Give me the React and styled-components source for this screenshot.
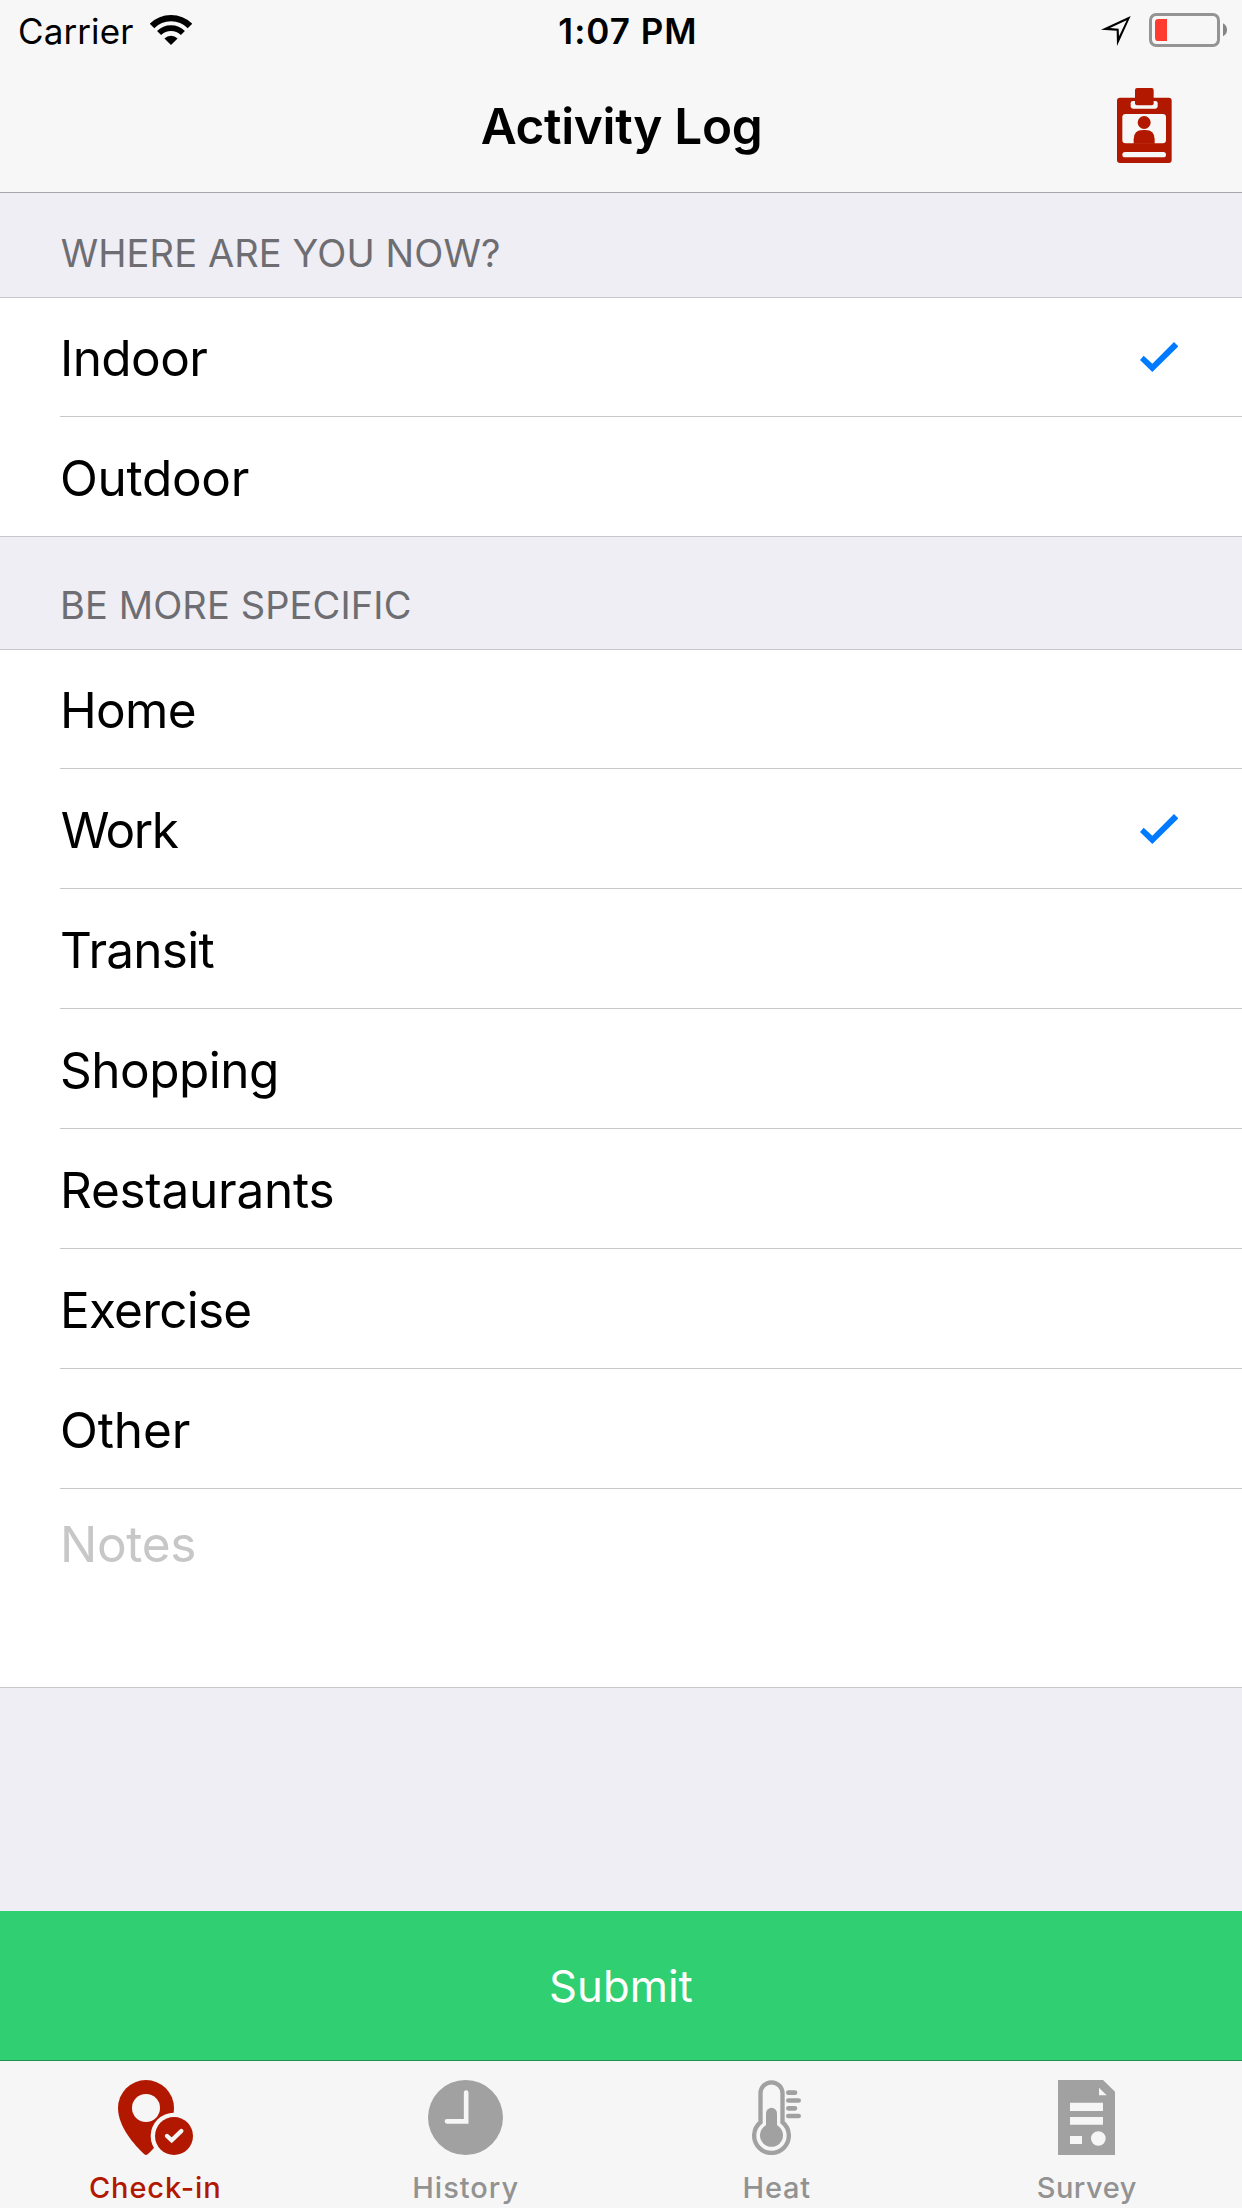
import React, { useState } from "react";
import styled, { createGlobalStyle } from "styled-components";

const RED = "#b21800";
const ICON_GREY = "#a1a1a1";
const LABEL_GREY = "#929292";

const GlobalStyle = createGlobalStyle`
  *, *::before, *::after { box-sizing: border-box; }
  body { margin: 0; background: #efeff4; }
`;

const Screen = styled.div`
  width: 1242px;
  height: 2208px;
  display: flex;
  flex-direction: column;
  overflow: hidden;
  background: #efeef4;
  color: #000;
  font-family: Inter, "Liberation Sans", sans-serif;
  svg { display: block; flex: none; }
`;

const Header = styled.header`
  flex: none;
  height: 193px;
  background: #f7f7f7;
  border-bottom: 1px solid #a7a7aa;
`;

const StatusBar = styled.div`
  height: 60px;
  display: grid;
  grid-template-columns: 1fr auto 1fr;
  font-size: 35px;
  line-height: 62px;
  white-space: nowrap;
`;

const StatusLeft = styled.div`
  display: flex;
  align-items: flex-start;
  gap: 16px;
  padding-left: 18px;
  letter-spacing: 0.11px;
  svg { margin-top: 14.5px; }
`;

const Clock = styled.div`
  padding-left: 14px;
  font-weight: 600;
  letter-spacing: 1.01px;
`;

const StatusRight = styled.div`
  display: flex;
  justify-content: flex-end;
  align-items: flex-start;
  gap: 18px;
  padding: 13px 15px 0 0;
  svg:first-child { margin-top: 3px; }
`;

const NavBar = styled.div`
  height: 132px;
  display: grid;
  grid-template-columns: 1fr auto 1fr;
`;

const Title = styled.h1`
  grid-column: 2;
  margin: 0;
  padding-left: 1px;
  font-size: 49.5px;
  font-weight: 600;
  line-height: 132px;
  letter-spacing: -0.345px;
`;

const NavButton = styled.button`
  justify-self: end;
  align-self: start;
  margin: 28px 70px 0 0;
  padding: 0;
  border: 0;
  background: none;
`;

const SectionHeader = styled.h2`
  flex: none;
  height: ${(p) => p.$height}px;
  margin: 0;
  padding-left: ${(p) => p.$inset}px;
  display: flex;
  align-items: flex-end;
  font-size: 38px;
  font-weight: 400;
  line-height: 88px;
  letter-spacing: ${(p) => p.$tracking}px;
  color: #6d6d72;
`;

const Group = styled.div`
  flex: none;
  background: #fff;
  border-top: 1px solid #c8c7cc;
  border-bottom: 1px solid #c8c7cc;
`;

const Row = styled.div`
  height: 120px;
  margin-left: 60px;
  padding-right: 63.7px;
  display: flex;
  justify-content: space-between;
  align-items: flex-end;
  border-bottom: 1px solid #c8c7cc;
  &:first-child { height: 119px; }
  &:last-child { height: 119px; border-bottom: 0; }
  svg { margin-bottom: 44.3px; }
`;

const RowLabel = styled.span`
  padding-left: ${(p) => p.$inset}px;
  font-size: 49.5px;
  line-height: 116px;
  letter-spacing: ${(p) => p.$tracking}px;
`;

const Notes = styled.div`
  height: 198px;
  padding-left: 60px;
  font-size: 49.5px;
  line-height: 110px;
  letter-spacing: -0.31px;
  color: #c7c7c7;
`;

const Spacer = styled.div`
  flex: 1;
`;

const Submit = styled.button`
  flex: none;
  height: 149px;
  margin: 0;
  padding: 2px 0 0;
  border: 0;
  background: #30cf71;
  color: #fff;
  font: 400 43.6px/147px Inter, "Liberation Sans", sans-serif;
  letter-spacing: 0.08px;
  text-align: center;
`;

const TabBar = styled.nav`
  flex: none;
  height: 148px;
  display: grid;
  grid-template-columns: repeat(4, 1fr);
  background: #f6f6f6;
  border-top: 1px solid #219150;
`;

const Tab = styled.div`
  display: flex;
  flex-direction: column;
  align-items: center;
  gap: 15px;
  padding-top: 19px;
  color: ${(p) => (p.$active ? RED : LABEL_GREY)};
`;

const TabLabel = styled.span`
  padding-left: ${(p) => p.$inset}px;
  font-size: 29px;
  font-weight: 500;
  line-height: 35px;
  letter-spacing: ${(p) => p.$tracking}px;
`;

const WifiIcon = () => (
  <svg width="42" height="30" viewBox="0 0 126 90">
    <path d="M6.1 33.1A80.5 80.5 0 0 1 119.9 33.1" fill="none" stroke="#000" strokeWidth="19" />
    <path d="M27.3 54.3A50.5 50.5 0 0 1 98.7 54.3" fill="none" stroke="#000" strokeWidth="17" />
    <path d="M63 90L43.2 70.2A28 28 0 0 1 82.8 70.2Z" />
  </svg>
);

const LocationIcon = () => (
  <svg width="30" height="30" viewBox="0 0 90 90">
    <path fillRule="evenodd" d="M89 0L0 41L47 44L48 90ZM77 13L27 36L53 38L54 61Z" />
  </svg>
);

const BatteryIcon = () => (
  <svg width="78" height="34" viewBox="0 0 234 102">
    <rect x="4.5" y="4.5" width="204" height="93" rx="17" fill="none" stroke="#949494" strokeWidth="9" />
    <path d="M54 18V84H28Q18 84 18 74V28Q18 18 28 18Z" fill="#ff3b30" />
    <path d="M222 31Q234 37 234 50.5Q234 64 222 70Z" fill="#868686" />
  </svg>
);

const BadgeIcon = () => (
  <svg width="54.67" height="75" viewBox="0 0 164 225">
    <rect y="29" width="164" height="196" rx="9" fill={RED} />
    <rect x="41" y="39" width="81" height="23" rx="7" fill="#f7f7f7" />
    <rect x="54" width="56" height="52" rx="6" fill={RED} />
    <rect x="16" y="78" width="131" height="88" rx="10" fill="#f7f7f7" />
    <circle cx="81.5" cy="103.5" r="19.5" fill={RED} />
    <path d="M50 167V154Q50 126 78 126H85Q113 126 113 154V167Z" fill={RED} />
    <rect x="16" y="192" width="131" height="16" rx="8" fill="#f7f7f7" />
  </svg>
);

const CheckIcon = () => (
  <svg width="38.33" height="30" viewBox="0 0 115 90">
    <path d="M11 41L37 65L102 0L115 13L37 90L0 54Z" fill="#007aff" />
  </svg>
);

const CheckInIcon = () => (
  <svg width="75" height="75" viewBox="0 0 225 225">
    <mask id="pin-cut">
      <rect width="225" height="225" fill="#fff" />
      <circle cx="84" cy="84" r="42" fill="#000" />
      <circle cx="168" cy="168" r="70" fill="#000" />
    </mask>
    <path
      d="M84 0A84 84 0 0 0 0 84C0 140 50 196 79 223Q84 227 89 223C118 196 168 140 168 84A84 84 0 0 0 84 0Z"
      fill={RED}
      mask="url(#pin-cut)"
    />
    <circle cx="168" cy="168" r="57" fill={RED} />
    <path d="M147 168L161 181L190 153" fill="none" stroke="#f6f6f6" strokeWidth="13" strokeLinecap="round" />
  </svg>
);

const HistoryIcon = () => (
  <svg width="76" height="75" viewBox="0 0 228 225">
    <circle cx="112.5" cy="112.5" r="112.5" fill={ICON_GREY} />
    <path d="M114.5 38V124H57" fill="none" stroke="#f6f6f6" strokeWidth="14" strokeLinecap="round" />
  </svg>
);

const HeatIcon = () => (
  <svg width="49" height="75" viewBox="0 0 147 225">
    <g fill="none" stroke={ICON_GREY}>
      <path d="M25.5 126.8V40A33 33 0 0 1 91.5 40V126.8A52 52 0 1 1 25.5 126.8Z" strokeWidth="13" />
      <path d="M109 38H129M109 61.5H140M109 85H129M109 108H140" strokeWidth="14" strokeLinecap="round" />
      <path d="M58.5 100V160" strokeWidth="33" strokeLinecap="round" />
    </g>
    <circle cx="58.5" cy="166" r="34.5" fill={ICON_GREY} />
  </svg>
);

const SurveyIcon = () => (
  <svg width="57" height="75" viewBox="0 0 171 225">
    <path
      fill={ICON_GREY}
      fillRule="evenodd"
      d="M0 0H135L171 35V225H0ZM123 23V46H146ZM36 68V93H135V68ZM36 111V134H135V111ZM36 168V192H72V168ZM143 175.5A22 22 0 1 0 99 175.5A22 22 0 1 0 143 175.5Z"
    />
  </svg>
);

const PLACES = [
  { label: "Indoor", tracking: -0.6, inset: 0 },
  { label: "Outdoor", tracking: -0.3, inset: 0 },
];

const DETAILS = [
  { label: "Home", tracking: -0.7, inset: 0 },
  { label: "Work", tracking: -1.5, inset: 0.8 },
  { label: "Transit", tracking: -0.75, inset: 0 },
  { label: "Shopping", tracking: -0.5, inset: 0 },
  { label: "Restaurants", tracking: -0.25, inset: 0 },
  { label: "Exercise", tracking: -0.78, inset: 0 },
  { label: "Other", tracking: -0.1, inset: 0 },
];

const TABS = [
  { label: "Check-in", icon: CheckInIcon, tracking: 0.9, inset: 0 },
  { label: "History", icon: HistoryIcon, tracking: 1, inset: 0 },
  { label: "Heat", icon: HeatIcon, tracking: 0.77, inset: 1 },
  { label: "Survey", icon: SurveyIcon, tracking: 0.51, inset: 0 },
];

const Options = ({ items, selected, onSelect }) =>
  items.map(({ label, tracking, inset }) => (
    <Row key={label} onClick={() => onSelect(label)}>
      <RowLabel $tracking={tracking} $inset={inset}>{label}</RowLabel>
      {selected === label && <CheckIcon />}
    </Row>
  ));

export default function App() {
  const [place, setPlace] = useState("Indoor");
  const [detail, setDetail] = useState("Work");

  return (
    <>
      <GlobalStyle />
      <Screen>
        <Header>
          <StatusBar>
            <StatusLeft>
              Carrier
              <WifiIcon />
            </StatusLeft>
            <Clock>1:07 PM</Clock>
            <StatusRight>
              <LocationIcon />
              <BatteryIcon />
            </StatusRight>
          </StatusBar>
          <NavBar>
            <Title>Activity Log</Title>
            <NavButton aria-label="Profile">
              <BadgeIcon />
            </NavButton>
          </NavBar>
        </Header>

        <SectionHeader $height={104} $tracking={0.12} $inset={60.7}>WHERE ARE YOU NOW?</SectionHeader>
        <Group>
          <Options items={PLACES} selected={place} onSelect={setPlace} />
        </Group>

        <SectionHeader $height={112} $tracking={0.12} $inset={60}>BE MORE SPECIFIC</SectionHeader>
        <Group>
          <Options items={DETAILS} selected={detail} onSelect={setDetail} />
          <Notes>Notes</Notes>
        </Group>

        <Spacer />
        <Submit>Submit</Submit>
        <TabBar>
          {TABS.map(({ label, icon: Icon, tracking, inset }, i) => (
            <Tab key={label} $active={i === 0}>
              <Icon />
              <TabLabel $tracking={tracking} $inset={inset}>{label}</TabLabel>
            </Tab>
          ))}
        </TabBar>
      </Screen>
    </>
  );
}
